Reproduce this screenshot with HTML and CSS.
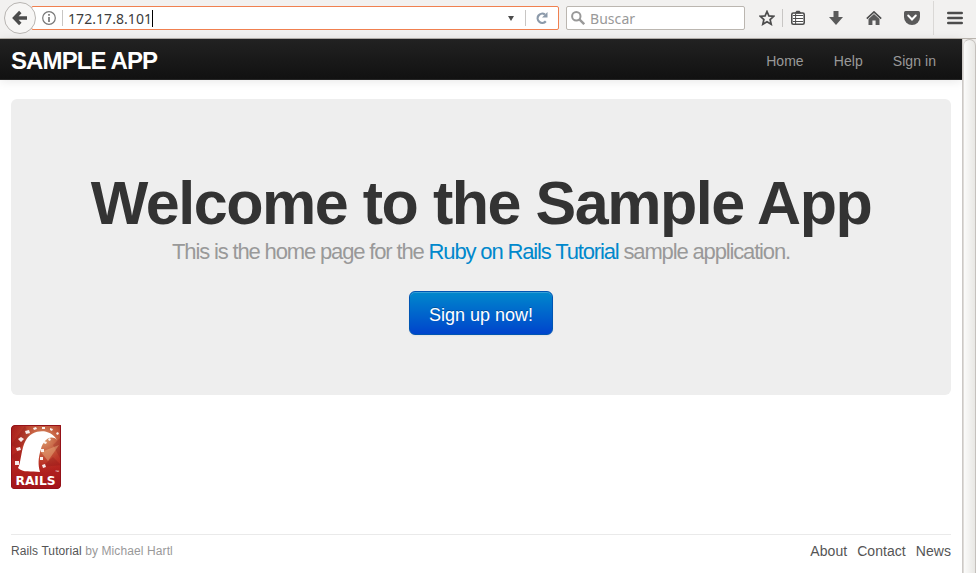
FILE: index.html
```html
<!DOCTYPE html>
<html lang="en">
<head>
<meta charset="utf-8">
<title>Sample App</title>
<link rel="stylesheet" href="styles.css">
</head>
<body>
<header class="toolbar">
  <div class="back"><svg width="16" height="16" viewBox="0 0 16 16"><path d="M8.3 2 2.5 8l5.8 6M3 8h12" fill="none" stroke="#4c4c4c" stroke-width="3.4"/></svg></div>
  <div class="address">
    <svg class="info" width="14" height="14" viewBox="0 0 14 14"><circle cx="7" cy="7" r="6.3" fill="none" stroke="#777" stroke-width="1.2"/><path d="M7 3v1.8M7 6v5" stroke="#777" stroke-width="1.7"/></svg>
    <span class="rule"></span>
    <span class="url">172.17.8.101</span><span class="caret"></span>
    <svg class="drop" width="7" height="5" viewBox="0 0 7 5"><path d="M0 0h6L3 5z" fill="#4c4c4c"/></svg>
    <span class="rule"></span>
    <svg class="reload" width="12" height="12" viewBox="0 0 12 12"><path d="M9.8 9.2A4.6 4.6 0 1 1 8.9 2.5" fill="none" stroke="#8c9aaa" stroke-width="2.2"/><path d="M11.5 0v5.6H6z" fill="#8c9aaa"/></svg>
  </div>
  <div class="search">
    <svg width="14" height="14" viewBox="0 0 14 14"><circle cx="5.3" cy="5.3" r="4.2" fill="none" stroke="#999" stroke-width="2"/><path d="m8.2 8.2 5 5" stroke="#999" stroke-width="2.4"/></svg>
    <span>Buscar</span>
  </div>
  <div class="tools">
    <svg class="star" width="16" height="16" viewBox="0 0 16 16"><path d="m8 1.5 1.9 4.4 4.8.4-3.6 3.2 1.1 4.8L8 11.8l-4.2 2.5 1.1-4.8-3.6-3.2 4.8-.4z" fill="none" stroke="#4c4c4c" stroke-width="1.7"/></svg>
    <span class="rule"></span>
    <svg class="list" width="14" height="16" viewBox="0 0 14 16"><rect x=".8" y="3" width="12.4" height="11.2" rx="1.5" fill="#fff" stroke="#4c4c4c" stroke-width="1.6"/><path d="M3.5 3.5 5.5.8h3L10.5 3.5z" fill="#4c4c4c"/><path d="M2 5.5h10M2 8.5h10M2 11.5h10M4.6 4v10" stroke="#4c4c4c" stroke-width="1"/></svg>
    <svg class="download" width="14" height="14" viewBox="0 0 14 14"><path d="M4.5 0h5v6H14L7 14 0 6h4.5z" fill="#5a5a5a"/></svg>
    <svg class="home" width="16" height="14" viewBox="0 0 16 14"><path d="M.8 7.6 8 .9l7.2 6.7" fill="none" stroke="#4c4c4c" stroke-width="1.6"/><path d="M8 3 13.5 8V14H9.6V9.5H6.4V14H2.5V8z" fill="#5a5a5a"/></svg>
    <svg class="pocket" width="16" height="14" viewBox="0 0 16 14"><path d="M1.5 0h13Q16 0 16 1.5V6A8 8 0 0 1 0 6V1.5Q0 0 1.5 0z" fill="#5a5a5a"/><path d="m4.2 4.5 3.8 4 3.8-4" fill="none" stroke="#fff" stroke-width="2" stroke-linecap="round"/></svg>
    <span class="rule tall"></span>
    <svg class="menu" width="16" height="14" viewBox="0 0 16 14"><path d="M1.3 2h13.4M1.3 7h13.4M1.3 12h13.4" stroke="#4c4c4c" stroke-width="2.6" stroke-linecap="round"/></svg>
  </div>
</header>
<div class="viewport">
  <div class="page">
    <nav class="navbar">
      <a class="brand">SAMPLE APP</a>
      <div class="links"><a>Home</a><a>Help</a><a>Sign in</a></div>
    </nav>
    <main class="container">
      <section class="hero">
        <h1>Welcome to the Sample App</h1>
        <h2>This is the home page for the <a>Ruby on Rails Tutorial</a> sample application.</h2>
        <a class="button">Sign up now!</a>
      </section>
      <svg class="logo" width="50" height="64" viewBox="0 0 50 64">
        <defs>
          <linearGradient id="red" x1="0" y1="0" x2="0" y2="1"><stop offset="0" stop-color="#a5201c"/><stop offset=".55" stop-color="#b82720"/><stop offset="1" stop-color="#a3141b"/></linearGradient>
          <radialGradient id="glow" cx=".65" cy=".3" r=".7"><stop offset="0" stop-color="#dda070"/><stop offset=".5" stop-color="#c65c3d" stop-opacity=".8"/><stop offset="1" stop-color="#b82720" stop-opacity="0"/></radialGradient>
        </defs>
        <path d="M4 0H50V60Q50 64 46 64H0V4Q0 0 4 0z" fill="url(#red)"/>
        <path d="M4 0H50V48H0V4Q0 0 4 0z" fill="url(#glow)"/>
        <path d="M0 20 14 1 19 12 8 24zM0 31l12-8-5 18zM42 20l7-7v20zM31 42l11-10 8 8z" fill="#7f1015" opacity=".25"/>
        <path d="M30 27 48 20 37 36z" fill="#edb785" opacity=".45"/>
        <path d="M7 43C10 38 10 23 15 15 21 5 38 2 46 15 40 9 32 15 30 24 27 33 27 40 29 47 20 46 12 48 7 43z" fill="#fff"/>
        <path d="m14 6 4-1 1 3-4 1zM22 3l3-1 1 2-3 1zM31 2l3 0 0 2-3 0zM39 3l3 1-1 2-2-1zM46 7l2 1-1 2-2-1zM7 14l3-2 3 2-3 3zM5 23l4-1 1 3-4 1zM4 36l4 0 0 4-4 0zM33 16l3 1-1 2-3-1zM30 24l3 0 0 3-3 0zM29 32l3 0 0 3-3 0zM31 40l3-1 1 3-3 1zM38 13l2 1-1 2-2-1z" fill="#fff" opacity=".9"/>
        <text x="4.5" y="59.5" class="wordmark" textLength="40" lengthAdjust="spacingAndGlyphs">RAILS</text>
        <text x="44" y="47.5" class="mark">™</text>
        <path d="M4 .5H49.5V60Q49.5 63.5 46 63.5H.5V4Q.5 .5 4 .5z" fill="none" stroke="#941219"/>
      </svg>
      <footer class="footer">
        <small><a>Rails Tutorial</a> by Michael Hartl</small>
        <nav><a>About</a><a>Contact</a><a>News</a></nav>
      </footer>
    </main>
  </div>
  <div class="scrollbar"><div class="thumb"></div></div>
</div>
</body>
</html>
```
FILE: styles.css
```css
* { box-sizing: border-box; }
body { margin: 0; height: 573px; overflow: hidden; background: #fff; color: #333; font: 14px/20px "Liberation Sans", Arial, sans-serif; }
svg { display: block; flex: none; }
.toolbar { height: 39px; display: flex; align-items: flex-start; background: #f2f1f0; border-bottom: 1px solid #b9b4ae; font-family: "Noto Sans", sans-serif; }
.back { width: 32px; height: 32px; margin: 2px 0 0 4px; border: 1px solid #b8b5b2; border-radius: 50%; background: #f7f6f5; display: flex; align-items: center; justify-content: center; position: relative; z-index: 1; flex: none; }
.address { width: 528px; height: 24px; margin: 6px 0 0 -5px; border: 1px solid #f08050; border-radius: 2px; background: #fff; display: flex; align-items: center; flex: none; }
.info { margin: 0 6px 0 10px; }
.rule { width: 1px; height: 16px; background: #c8c6c4; flex: none; }
.url { margin: 2px 0 0 5px; color: #3c3c3c; letter-spacing: .06px; }
.caret { width: 1px; height: 17px; background: #000; }
.drop { margin: 0 14px 0 auto; }
.reload { margin: 0 10px; }
.search { width: 179px; height: 24px; margin: 6px 0 0 7px; border: 1px solid #bbb6b0; border-radius: 2px; background: #fff; color: #999; display: flex; align-items: center; gap: 5px; padding-left: 4px; flex: none; }
.search span { padding-top: 2px; letter-spacing: .05px; }
.drop { transform: translateX(4px); }
.tools { flex: 1; height: 36px; display: flex; align-items: center; }
.star { margin-left: 14px; }
.tools .rule { margin-left: 7px; height: 18px; }
.list { margin-left: 8px; }
.download { margin-left: 24px; }
.home { margin-left: 23px; }
.pocket { margin-left: 22px; }
.tools .tall { height: 34px; margin-left: 13px; background: #dad8d6; }
.menu { margin-left: 13px; }
.viewport { display: flex; height: 534px; }
.page { width: 962px; background: #fff; }
.navbar { height: 41px; padding: 0 26px 0 11px; display: flex; align-items: center; justify-content: space-between; background: linear-gradient(#222, #111); border-bottom: 1px solid #252525; box-shadow: 0 1px 10px rgba(0,0,0,.1); }
.brand { color: #fff; font-weight: bold; font-size: 24px; line-height: 40px; padding-top: 3px; letter-spacing: -.9px; }
.links { display: flex; gap: 30px; color: #999; padding-top: 3px; letter-spacing: .06px; }
.container { margin: 19px 11px 0; }
.hero { height: 296px; padding-top: 74px; border-radius: 6px; background: #eee; text-align: center; }
h1 { margin: 0; font-size: 61px; line-height: 60px; letter-spacing: -1.45px; white-space: nowrap; }
h2 { margin: 6px 0 0; font-size: 22px; line-height: 25px; font-weight: normal; letter-spacing: -1.15px; color: #999; white-space: nowrap; }
h2 a { color: #08c; }
.button { display: inline-block; width: 144px; height: 44px; margin-top: 27px; border: 1px solid #0055b3; border-radius: 6px; background: linear-gradient(#08c, #04c); box-shadow: inset 0 1px 0 rgba(255,255,255,.2), 0 1px 2px rgba(0,0,0,.05); color: #fff; font-size: 18px; line-height: 46px; text-shadow: 0 -1px 0 rgba(0,0,0,.25); }
.logo { margin-top: 30px; border-radius: 4px 0 4px 4px; }
.wordmark { font: bold 13px "DejaVu Sans", sans-serif; fill: #fff; }
.mark { font: 4px/1 "Liberation Sans", sans-serif; fill: #fff; }
.footer { margin-top: 45px; border-top: 1px solid #eaeaea; padding-top: 6px; display: flex; justify-content: space-between; color: #999; }
.footer small { font-size: 12px; letter-spacing: .1px; }
.footer a { color: #555; }
.footer nav { display: flex; gap: 10px; letter-spacing: .05px; }
.scrollbar { width: 14px; background: #edebe9; border-left: 1px solid #ccc9c6; }
.thumb { height: 560px; border: 1px solid #c5c1bd; border-left-color: #dedbd8; border-radius: 7px; background: linear-gradient(90deg, #fbfbfa, #e8e7e4); }
```
